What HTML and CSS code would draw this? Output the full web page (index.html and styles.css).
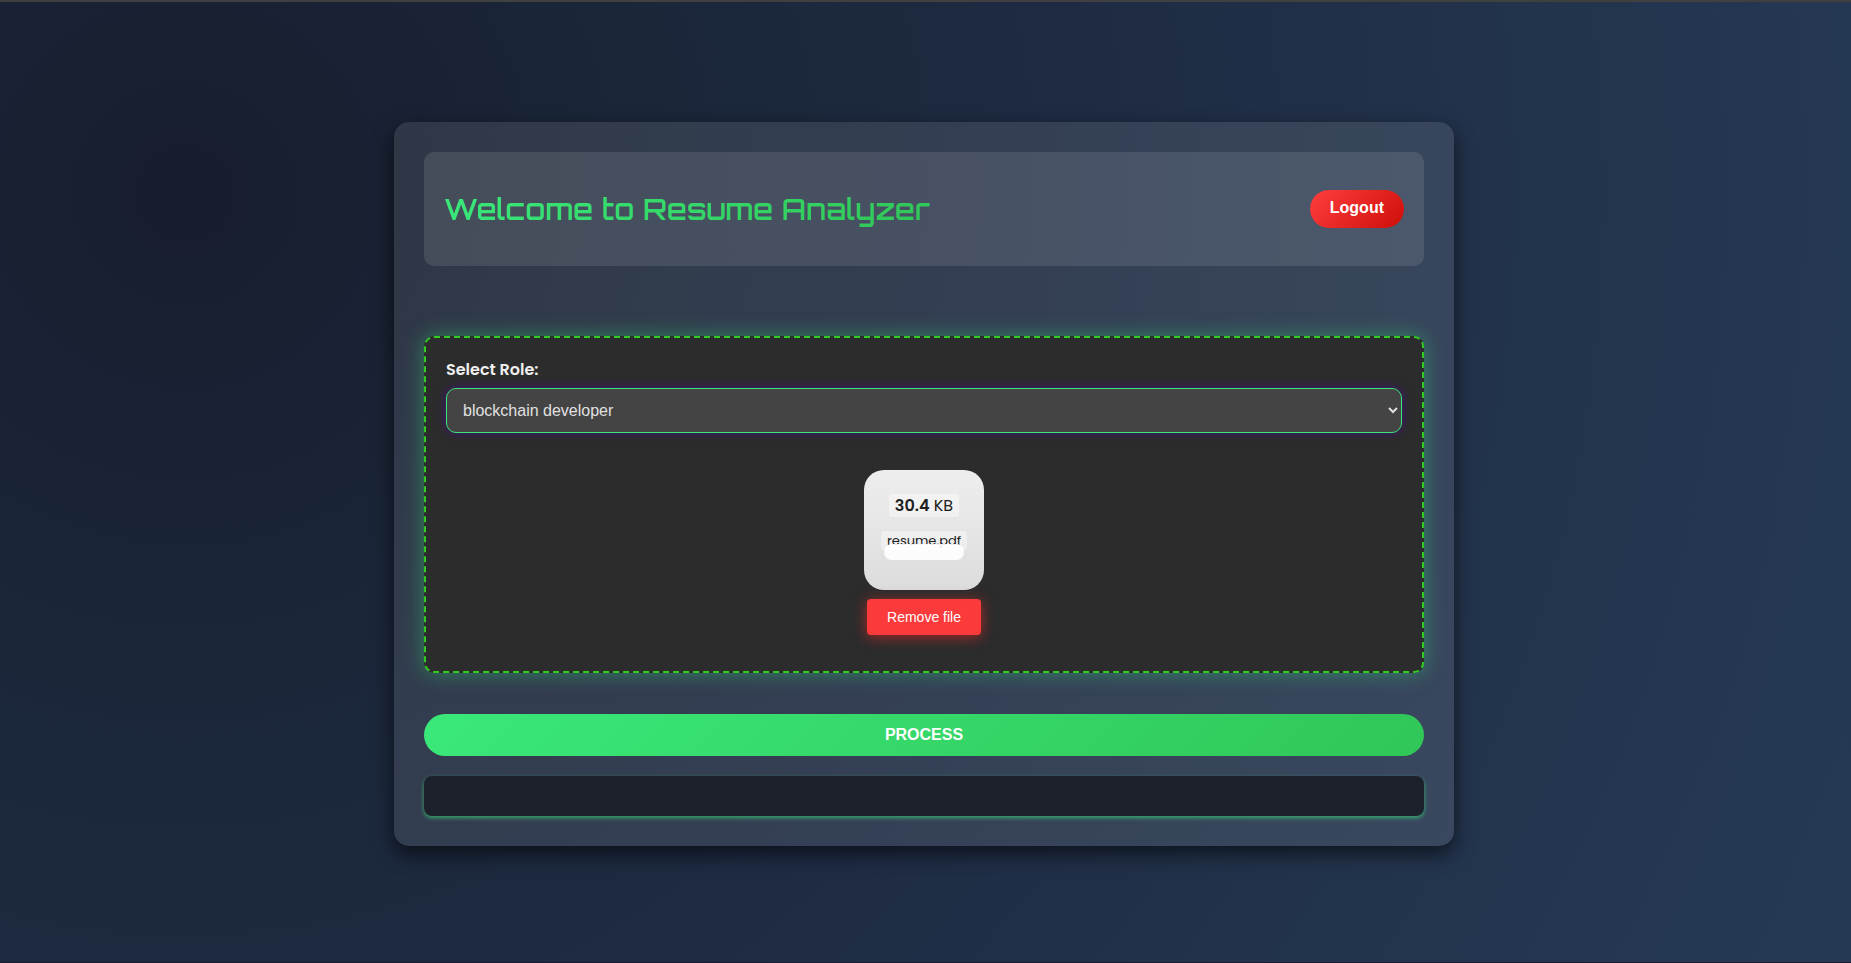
FILE: index.html
```
<!DOCTYPE html>
<html lang="en">
<head>
<meta charset="utf-8">
<title>Resume Analyzer</title>
<link rel="stylesheet" href="styles.css">
</head>
<body>
<main class="container">
  <header class="header">
    <h1 class="title">Welcome to Resume Analyzer</h1>
    <button class="logout" type="button">Logout</button>
  </header>
  <form class="form">
    <section class="upload">
      <label class="label" for="role">Select Role:</label>
      <select class="role" id="role">
        <option>blockchain developer</option>
      </select>
      <div class="preview">
        <div class="file-card">
          <div class="file-size"><span class="pill"><strong>30.4</strong> KB</span></div>
          <div class="file-name"><span class="pill">resume.pdf</span></div>
          <div class="progress"></div>
        </div>
        <button class="remove" type="button">Remove file</button>
      </div>
    </section>
    <button class="process" type="button">PROCESS</button>
  </form>
  <section class="output"></section>
</main>
</body>
</html>
```
FILE: styles.css
```
* { box-sizing: border-box; }

body {
  margin: 0;
  min-height: 100vh;
  display: flex;
  align-items: center;
  justify-content: center;
  padding: 23px 23px 20px 20px;
  border-top: 2px solid #404040;
  border-bottom: 1px solid #1a1a30;
  background: radial-gradient(circle at 10% 20%, #171d2f 0%, #1a2537 22%, #1e2b43 50%, #22324b 70%, #263a54 100%);
  font-family: Poppins, "Open Sans", sans-serif;
  color: #f0f0f0;
}

button, select { font-family: "Liberation Sans", Arial, sans-serif; }

.container {
  width: 100%;
  max-width: 1060px;
  padding: 30px;
  border-radius: 15px;
  background: rgba(255, 255, 255, 0.1);
  box-shadow: 0 8px 20px rgba(0, 0, 0, 0.6);
}

.header {
  display: flex;
  align-items: center;
  justify-content: space-between;
  min-height: 114px;
  padding: 20px;
  margin-bottom: 70px;
  border-radius: 10px;
  background: rgba(255, 255, 255, 0.1);
}

.title {
  margin: 0;
  font-family: Orbitron, "DejaVu Sans", sans-serif;
  font-size: 29px;
  font-weight: 600;
  line-height: 40px;
  color: transparent;
  background: linear-gradient(135deg, #3ae87a, #30c757);
  -webkit-background-clip: text;
  background-clip: text;
}

.logout {
  height: 38px;
  padding: 0 20px 2px;
  border: 0;
  border-radius: 20px;
  background: linear-gradient(135deg, #ff3e3e, #cd0e08);
  color: #fff;
  font-size: 16px;
  font-weight: 700;
}

.upload {
  padding: 20px 20px 36px;
  border: 2px dashed #32cd20;
  border-radius: 10px;
  background: #2c2c2c;
  box-shadow: 0 0 20px rgba(46, 204, 113, 0.5);
}

.label {
  display: block;
  margin-bottom: 6px;
  font-size: 16px;
  font-weight: 600;
  line-height: 24px;
}

.role {
  display: block;
  width: 100%;
  height: 45px;
  padding: 0 12px;
  border: 1px solid #3ae87a;
  border-radius: 10px;
  background: #444;
  color: #e0e0e0;
  font-size: 16px;
  box-shadow: 0 0 10px rgba(80, 0, 170, 0.6);
}

.preview {
  display: flex;
  flex-direction: column;
  align-items: center;
  gap: 9px;
  margin-top: 37px;
}

.file-card {
  width: 120px;
  height: 120px;
  padding-top: 24px;
  border-radius: 20px;
  background: linear-gradient(#eee, #dcdcdc);
  color: #202020;
  text-align: center;
  white-space: nowrap;
}

.file-card strong { font-weight: 600; }

.pill {
  display: inline-block;
  padding: 0 6px;
  border-radius: 3px;
  background: rgba(255, 255, 255, 0.4);
}

.file-size { font-size: 16px; line-height: 23px; height: 37px; }
.file-name { font-size: 13px; line-height: 19px; height: 19px; }

.progress {
  position: relative;
  width: 80px;
  height: 16px;
  margin: -6px auto 0;
  border-radius: 8px;
  background: rgba(255, 255, 255, 0.9);
}

.remove {
  height: 36px;
  padding: 0 20px;
  border: 0;
  border-radius: 4px;
  background: #fb3b3b;
  color: #fff;
  font-size: 14px;
  box-shadow: 0 2px 14px rgba(251, 40, 40, 0.6);
}

.process {
  display: block;
  width: 100%;
  height: 42px;
  margin-top: 41px;
  border: 0;
  border-radius: 21px;
  background: linear-gradient(135deg, #3ae87a, #30c757);
  color: #fff;
  font-size: 16px;
  font-weight: 700;
}

.output {
  height: 40px;
  margin-top: 20px;
  border-radius: 8px;
  background: #1c212b;
  box-shadow: 0 2px 4px rgba(58, 232, 122, 0.6);
}
```
